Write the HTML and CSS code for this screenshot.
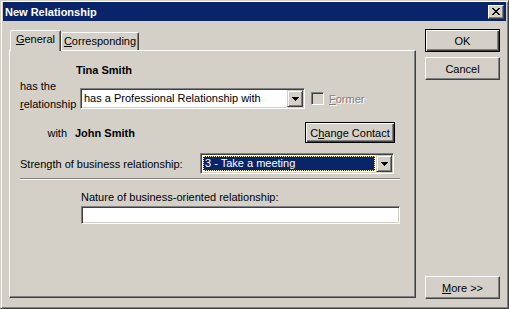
FILE: index.html
```html
<!DOCTYPE html>
<html lang="en">
  <head>
    <meta charset="UTF-8" />
    <title>New Relationship</title>
    <link rel="stylesheet" href="styles.css">
  </head>
  <body>
    <div class="window">
      <div class="titlebar">
        <span class="title">New Relationship</span>
        <button class="close-btn">
          <svg width="8" height="7" viewBox="0 0 8 7" shape-rendering="crispEdges">
            <path d="M0 0h2v1H0z M6 0h2v1H6z M1 1h2v1H1z M5 1h2v1H5z M2 2h4v1H2z M3 3h2v1H3z M2 4h4v1H2z M1 5h2v1H1z M5 5h2v1H5z M0 6h2v1H0z M6 6h2v1H6z" fill="#000"/>
          </svg>
        </button>
      </div>
      <div class="dialog">
        <div class="tab-control">
          <div class="tab-strip">
            <div class="tab tab-active"><u>G</u>eneral</div>
            <div class="tab tab-corr"><u>C</u>orresponding</div>
          </div>
          <div class="tab-panel">
            <div class="name-row">Tina Smith</div>
            <div class="rel-row">
              <div class="rel-label">has the<br><u>r</u>elationship</div>
              <div class="rel-fields">
                <div class="combo combo-rel">
                  <span class="combo-value">has a Professional Relationship with</span>
                  <span class="combo-btn">
                    <svg width="7" height="4" viewBox="0 0 7 4" shape-rendering="crispEdges"><path d="M0 0h7v1H0z M1 1h5v1H1z M2 2h3v1H2z M3 3h1v1H3z" fill="#000"/></svg>
                  </span>
                </div>
                <div class="check">
                  <span class="check-box"></span>
                  <span class="check-text"><u>F</u>ormer</span>
                </div>
              </div>
            </div>
            <div class="with-row">
              <span class="with-label">with</span>
              <span class="with-name">John Smith</span>
              <button class="btn btn-default btn-change">C<u>h</u>ange Contact</button>
            </div>
            <div class="strength-row">
              <span class="strength-label">Strength of business relationship:</span>
              <div class="combo combo-strength">
                <span class="combo-value combo-selected">3 - Take a meeting</span>
                <span class="combo-btn">
                  <svg width="7" height="4" viewBox="0 0 7 4" shape-rendering="crispEdges"><path d="M0 0h7v1H0z M1 1h5v1H1z M2 2h3v1H2z M3 3h1v1H3z" fill="#000"/></svg>
                </span>
              </div>
            </div>
            <div class="sep"></div>
            <div class="nature-label">Nature of business-oriented relationship:</div>
            <div class="text-field"></div>
          </div>
        </div>
        <div class="buttons">
          <button class="btn btn-default">OK</button>
          <button class="btn btn-cancel">Cancel</button>
          <button class="btn btn-more"><u>M</u>ore &gt;&gt;</button>
        </div>
      </div>
    </div>
  </body>
</html>
```

FILE: styles.css
```css
* {
  margin: 0;
  padding: 0;
  box-sizing: border-box;
  font-family: "Liberation Sans", Arial, sans-serif;
  font-size: 11px;
}

body {
  width: 509px;
  height: 309px;
  overflow: hidden;
  background-color: #d4d0c8;
  color: #000;
}

u {
  text-decoration: underline;
}

.window {
  width: 509px;
  height: 309px;
  background-color: #d4d0c8;
  border: 1px solid;
  border-color: #d4d0c8 #404040 #404040 #d4d0c8;
  box-shadow: inset 1px 1px #fff, inset -1px -1px #808080;
  padding: 1px 2px 2px 2px;
  display: flex;
  flex-direction: column;
}

.titlebar {
  height: 19px;
  background-color: #0a246a;
  color: #fff;
  display: flex;
  align-items: center;
  padding: 0 2px 0 2px;
}

.title {
  font-weight: bold;
  color: #fff;
}

.close-btn {
  margin-left: auto;
  width: 16px;
  height: 14px;
  background-color: #d4d0c8;
  border: 1px solid;
  border-color: #fff #404040 #404040 #fff;
  box-shadow: inset -1px -1px #808080;
  display: flex;
  align-items: center;
  justify-content: center;
}

.dialog {
  flex: 1;
  display: flex;
  padding: 8px 6px 7px 6px;
}

.tab-control {
  width: 407px;
  height: 269px;
  display: flex;
  flex-direction: column;
}

.tab-strip {
  height: 21px;
  display: flex;
  align-items: flex-end;
  padding-left: 1px;
}

.tab {
  height: 18px;
  line-height: 16px;
  text-align: center;
  background-color: #d4d0c8;
  border: 1px solid;
  border-bottom: none;
  border-color: #fff #404040 transparent #fff;
  border-radius: 2px 2px 0 0;
  box-shadow: inset -1px 0 #808080;
}

.tab-active {
  width: 51px;
  height: 21px;
  line-height: 17px;
  margin-bottom: -1px;
  position: relative;
  z-index: 1;
}

.tab-corr {
  width: 78px;
}

.tab-panel {
  height: 248px;
  border: 1px solid;
  border-color: #fff #404040 #404040 #fff;
  box-shadow: inset -1px -1px #808080;
  padding: 12px 0 0 10px;
}

.name-row {
  padding-left: 56px;
  line-height: 14px;
  font-weight: bold;
}

.rel-row {
  display: flex;
  align-items: flex-end;
}

.rel-label {
  width: 60px;
  line-height: 18px;
}

.rel-fields {
  display: flex;
  align-items: center;
  margin-bottom: 4px;
}

.combo {
  display: flex;
  height: 21px;
  background-color: #fff;
  border: 1px solid;
  border-color: #808080 #fff #fff #808080;
  box-shadow: inset 1px 1px #404040, inset -1px -1px #d4d0c8;
  padding: 2px;
}

.combo-value {
  flex: 1;
  line-height: 15px;
  padding-left: 1px;
  white-space: nowrap;
  overflow: hidden;
}

.combo-btn {
  width: 16px;
  height: 17px;
  margin: -1px -1px -1px 0;
  background-color: #d4d0c8;
  border: 1px solid;
  border-color: #d4d0c8 #404040 #404040 #d4d0c8;
  box-shadow: inset 1px 1px #fff, inset -1px -1px #808080;
  display: flex;
  align-items: center;
  justify-content: center;
}

.combo-rel {
  width: 225px;
}

.check {
  display: flex;
  align-items: center;
  margin-left: 6px;
}

.check-box {
  width: 13px;
  height: 13px;
  background-color: #d4d0c8;
  border: 1px solid;
  border-color: #808080 #fff #fff #808080;
  box-shadow: inset 1px 1px #404040, inset -1px -1px #d4d0c8;
}

.check-text {
  margin-left: 5px;
  color: #808080;
  text-shadow: 1px 1px #fff;
}

.with-row {
  display: flex;
  align-items: center;
  margin-top: 9px;
  height: 21px;
}

.with-label {
  width: 55px;
  padding-right: 8px;
  text-align: right;
}

.with-name {
  flex: 1;
  font-weight: bold;
}

.btn {
  width: 75px;
  height: 23px;
  background-color: #d4d0c8;
  color: #000;
  border: 1px solid;
  border-color: #fff #404040 #404040 #fff;
  box-shadow: inset -1px -1px #808080;
  text-align: center;
}

.btn-default {
  border-color: #000;
  box-shadow: inset 1px 1px #fff, inset -1px -1px #404040, inset -2px -2px #808080;
}

.btn-change {
  width: 90px;
  height: 21px;
  margin-right: 20px;
}

.strength-row {
  display: flex;
  align-items: center;
  margin-top: 10px;
}

.strength-label {
  width: 180px;
}

.combo-strength {
  width: 194px;
}

.combo-selected {
  background-color: #0a246a;
  color: #fff;
  border: 1px dotted #fff8c0;
  line-height: 13px;
  margin-right: 1px;
}

.sep {
  width: 380px;
  height: 2px;
  margin-top: 4px;
  border-top: 1px solid #808080;
  border-bottom: 1px solid #fff;
}

.nature-label {
  margin-top: 10px;
  padding-left: 61px;
  line-height: 14px;
}

.text-field {
  width: 319px;
  height: 18px;
  margin: 2px 0 0 61px;
  background-color: #fff;
  border: 1px solid;
  border-color: #808080 #fff #fff #808080;
  box-shadow: inset 1px 1px #404040, inset -1px -1px #d4d0c8;
}

.buttons {
  width: 75px;
  margin-left: 9px;
  display: flex;
  flex-direction: column;
}

.btn-cancel {
  margin-top: 5px;
}

.btn-more {
  margin-top: auto;
}
```
